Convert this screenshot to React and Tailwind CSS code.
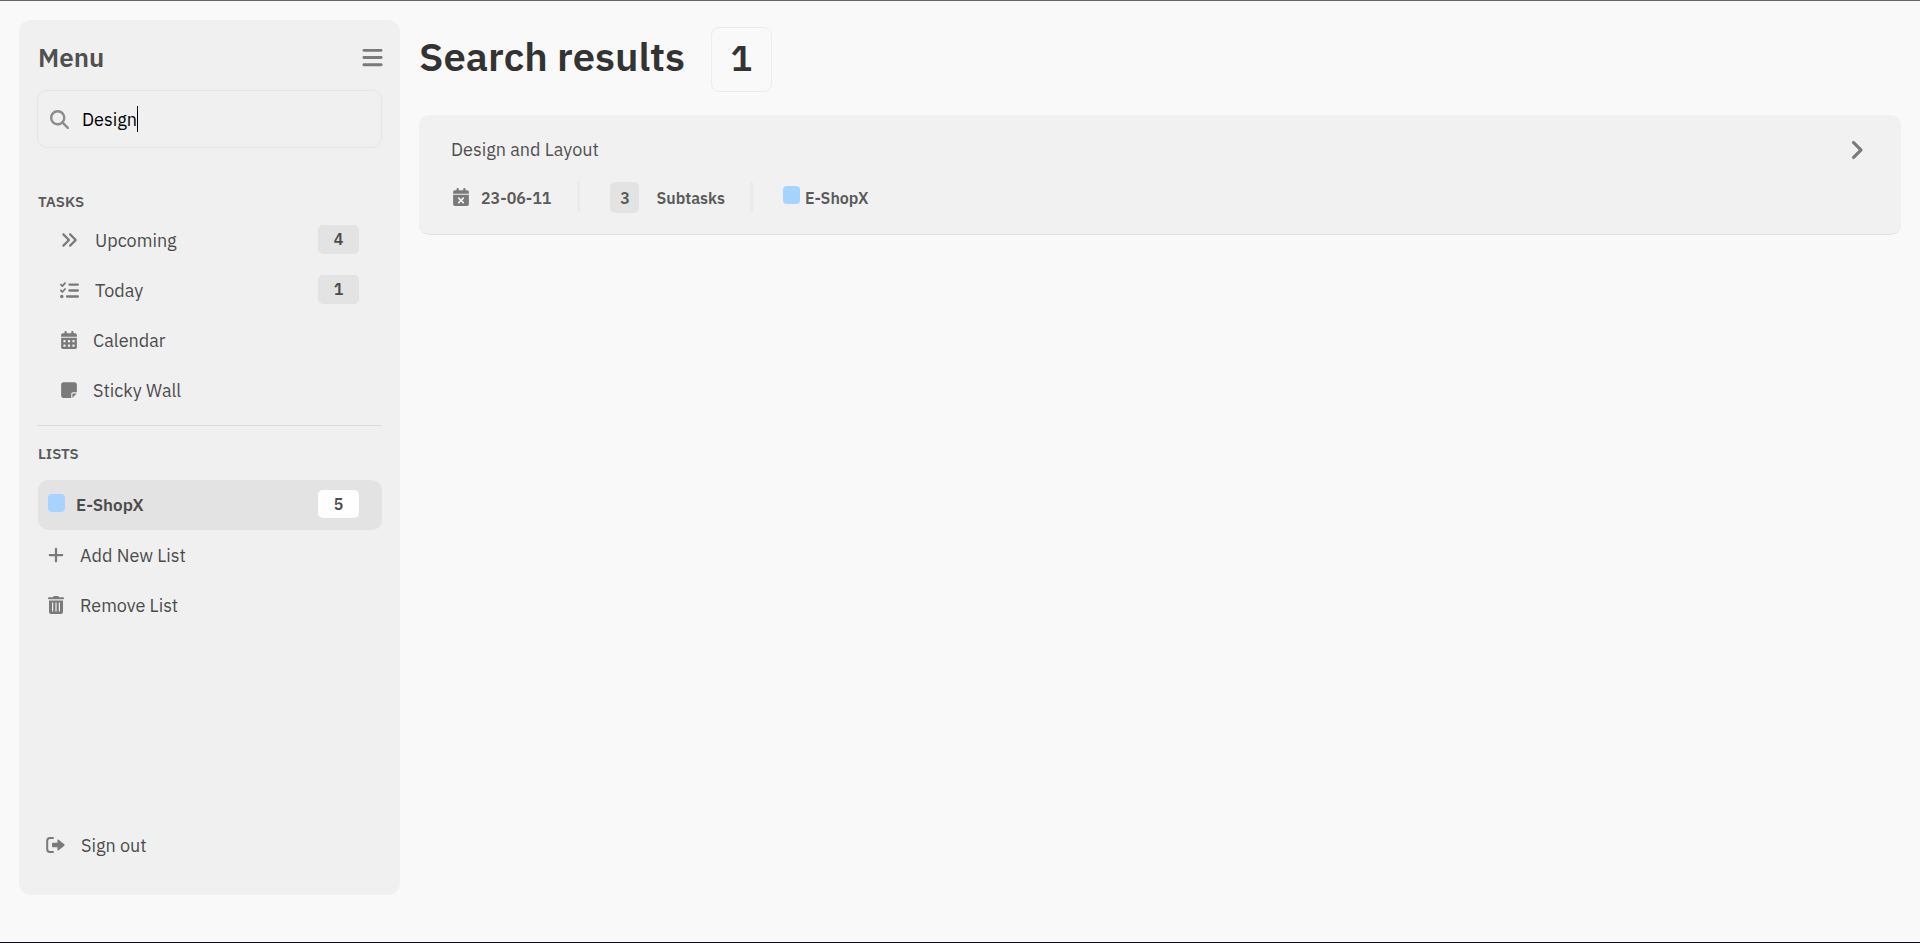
import React, { useState } from "react";
import { FaBars, FaMagnifyingGlass, FaAnglesRight, FaListCheck, FaCalendarDays, FaNoteSticky, FaPlus, FaCalendarXmark, FaChevronRight } from "react-icons/fa6";

function SignOutIcon() {
  return (
    <svg viewBox="0 0 19 16" className="h-4 w-[19px]" aria-hidden="true">
      <path d="M7 1H4Q1.200 1 1.200 3.800V12.200Q1.200 15 4 15H7" fill="none" stroke="currentColor" strokeWidth="2" strokeLinecap="round" />
      <path d="M6 6.600Q6 5.800 6.800 5.800H11.400V3.200Q11.600 2 12.700 2.800L18.300 7.300Q19 8 18.300 8.700L12.700 13.200Q11.600 14 11.400 12.800V10.200H6.800Q6 10.200 6 9.400Z" fill="currentColor" />
    </svg>
  );
}

function TrashIcon() {
  return (
    <svg viewBox="0 0 16 18" className="h-[18px] w-4" fill="currentColor" aria-hidden="true">
      <path d="M5 1.200Q5.400 0 6.500 0H9.500Q10.600 0 11 1.200H15.200Q16 1.200 16 2.200T15.200 3.300H0.800Q0 3.300 0 2.200T0.800 1.200Z" />
      <path fillRule="evenodd" d="M1 4.500H15V16Q15 18 13 18H3Q1 18 1 16ZM4 6.500V15.500H5.200V6.500ZM7.400 6.500V15.500H8.600V6.500ZM10.800 6.500V15.500H12V6.500Z" />
    </svg>
  );
}

const tasks = [
  { label: "Upcoming", count: 4, icon: <FaAnglesRight className="size-[18px]" />, iconBox: "w-[21px]" },
  { label: "Today", count: 1, icon: <FaListCheck className="size-[19px]" />, iconBox: "w-[21px]" },
  { label: "Calendar", icon: <FaCalendarDays className="size-[18px]" />, iconBox: "w-[19px]" },
  { label: "Sticky Wall", icon: <FaNoteSticky className="size-[18px]" />, iconBox: "w-[19px]" },
];

function Sidebar() {
  const [query, setQuery] = useState("Design");
  return (
    <aside className="flex w-[381px] shrink-0 flex-col rounded-xl bg-[#f0f0f0] px-[18px] pt-4 pb-[25px]">
      <div className="flex h-[42px] items-center justify-between pl-[1px]">
        <h2 className="text-[26px] leading-9 font-semibold text-[#505050]">Menu</h2>
        <button aria-label="Toggle menu" className="text-[#7a7a7a]">
          <FaBars className="-mr-[2px] size-[23px]" />
        </button>
      </div>

      <div className="mt-3 flex h-[58px] items-center rounded-[10px] border border-[#e5e5e5] pl-3">
        <FaMagnifyingGlass className="mr-[13px] size-[19px] shrink-0 text-[#8c8c8c]" />
        <input
          type="text"
          aria-label="Search"
          value={query}
          onChange={(e) => setQuery(e.target.value)}
          className="field-sizing-content max-w-[280px] bg-transparent pt-[2px] text-[18px] leading-6 text-black caret-transparent outline-none"
        />
        <span className="h-[26px] w-px shrink-0 bg-black" />
      </div>

      <nav aria-label="Tasks" className="mt-[42px] border-b border-[#dadada] pb-[10px]">
        <h3 className="pl-[1px] text-[15px] leading-6 font-semibold text-[#5a5a5a]">TASKS</h3>
        <ul className="mt-[1px]">
          {tasks.map((t) => (
            <li key={t.label}>
              <a href="#" className="flex h-[50px] items-center pr-[23px] pl-[23px] text-[18px] text-[#4c4c4c]">
                <span className={"mr-[14px] flex text-[#7a7a7a] " + t.iconBox}>{t.icon}</span>
                <span>{t.label}</span>
                {t.count && (
                  <span className="mb-[2px] ml-auto flex h-[29px] w-[41px] items-center justify-center rounded-[5px] bg-[#e3e3e3] text-[16px] font-semibold">{t.count}</span>
                )}
              </a>
            </li>
          ))}
        </ul>
      </nav>

      <nav aria-label="Lists" className="mt-4 pl-[1px]">
        <h3 className="text-[15px] leading-6 font-semibold text-[#5a5a5a]">LISTS</h3>
        <ul className="mt-[14px] text-[18px] text-[#4c4c4c]">
          <li>
            <a href="#" className="flex h-[50px] items-center rounded-[10px] bg-[#e3e3e3] pr-[23px] pl-[10px] text-[17px] font-semibold">
              <span className="mr-[11px] mb-1 h-[18px] w-[17px] rounded-[4px] bg-[#a6d3ff]" />
              <span className="pt-[2px]">E-ShopX</span>
              <span className="mb-[2px] ml-auto flex h-7 w-[41px] items-center justify-center rounded-[5px] bg-white text-[16px]">5</span>
            </a>
          </li>
          <li>
            <button className="flex h-[50px] w-full items-center pl-[9px]">
              <span className="mr-[15px] flex w-[18px] justify-center text-[#7a7a7a]"><FaPlus className="size-[18px]" /></span>
              Add New List
            </button>
          </li>
          <li>
            <button className="flex h-[50px] w-full items-center pl-[9px]">
              <span className="mr-[15px] flex w-[18px] justify-center text-[#7a7a7a]"><TrashIcon /></span>
              Remove List
            </button>
          </li>
        </ul>
      </nav>

      <button className="mt-auto flex h-[50px] items-center pl-[9px] text-[18px] text-[#4c4c4c]">
        <span className="mr-4 flex text-[#7a7a7a]"><SignOutIcon /></span>
        Sign out
      </button>
    </aside>
  );
}

function Divider() {
  return <span className="h-[30px] w-[3px] bg-[#ebebeb]" />;
}

function Results() {
  return (
    <main className="min-w-0 flex-1">
      <header className="flex items-center gap-[26px] pt-[7px]">
        <h1 className="pb-[6px] text-[40px] leading-[59px] font-semibold text-[#333]">Search results</h1>
        <span className="flex h-[65px] w-[61px] items-center justify-center rounded-lg border border-[#ededed] pb-[3px] text-[36px] font-semibold text-[#333]">1</span>
      </header>

      <article className="mt-[23px] rounded-[10px] border-b border-[#e3e3e3] bg-[#f1f1f1] pt-[21px] pr-[35px] pb-5 pl-8">
        <div className="flex items-center justify-between">
          <h2 className="text-[18px] leading-7 text-[#505050]">Design and Layout</h2>
          <button aria-label="Open task" className="text-[#7a7a7a]">
            <FaChevronRight className="size-5 stroke-[20] stroke-current" />
          </button>
        </div>
        <div className="mt-[17px] mb-[1px] flex h-[32px] items-center text-[16px] font-semibold text-[#5a5a5a]">
          <FaCalendarXmark className="mr-[11px] ml-[1px] size-[18px] text-[#7a7a7a]" />
          <span className="mr-[26px] pt-[2px]">23-06-11</span>
          <Divider />
          <span className="ml-[30px] flex h-[31px] w-[29px] items-center justify-center rounded-[5px] bg-[#e3e3e3] pt-[1px]">3</span>
          <span className="mr-[25px] ml-[17px] pt-[2px]">Subtasks</span>
          <Divider />
          <span className="mb-1 ml-[30px] h-[18px] w-[17px] rounded-[4px] bg-[#a6d3ff]" />
          <span className="ml-[5px] pt-[2px]">E-ShopX</span>
        </div>
      </article>
    </main>
  );
}

export default function App() {
  return (
    <div className="flex h-screen min-h-[720px] gap-[19px] border-y border-t-[#69666a] border-b-[#0b0a18] bg-[#f9f9f9] px-[19px] pt-[19px] pb-[47px] font-['IBM_Plex_Sans',Roboto,sans-serif]">
      <Sidebar />
      <Results />
    </div>
  );
}
